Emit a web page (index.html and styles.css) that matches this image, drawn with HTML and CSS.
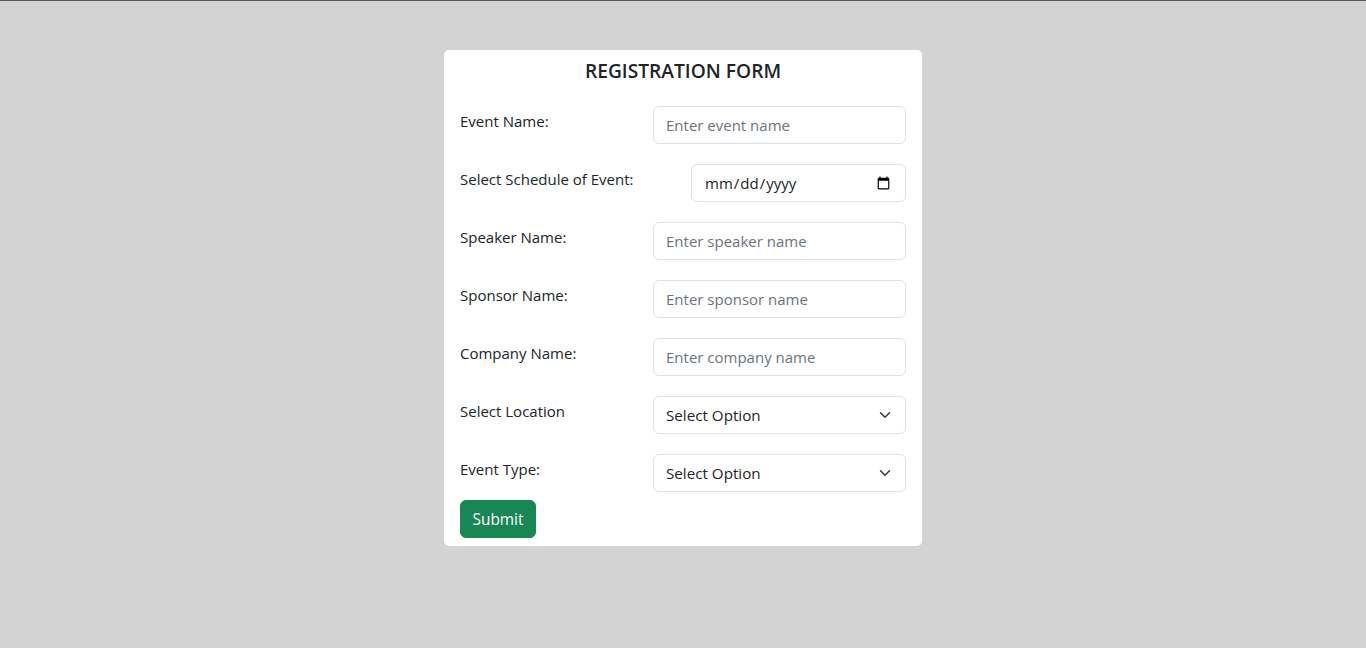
FILE: index.html
```html
<!DOCTYPE html>
<html lang="en">
<head>
<meta charset="utf-8">
<title>Registration Form</title>
<link rel="stylesheet" href="styles.css">
</head>
<body>
<main class="page">
  <form class="card">
    <h1 class="title">REGISTRATION FORM</h1>
    <div class="row">
      <label class="label" for="ev">Event Name:</label>
      <input class="control" id="ev" type="text" placeholder="Enter event name">
    </div>
    <div class="row">
      <label class="label" for="dt">Select Schedule of Event:</label>
      <input class="control date" id="dt" type="date">
    </div>
    <div class="row">
      <label class="label" for="sp">Speaker Name:</label>
      <input class="control" id="sp" type="text" placeholder="Enter speaker name">
    </div>
    <div class="row">
      <label class="label" for="so">Sponsor Name:</label>
      <input class="control" id="so" type="text" placeholder="Enter sponsor name">
    </div>
    <div class="row">
      <label class="label" for="co">Company Name:</label>
      <input class="control" id="co" type="text" placeholder="Enter company name">
    </div>
    <div class="row">
      <label class="label" for="lo">Select Location</label>
      <select class="control select" id="lo"><option>Select Option</option></select>
    </div>
    <div class="row last">
      <label class="label" for="ty">Event Type:</label>
      <select class="control select" id="ty"><option>Select Option</option></select>
    </div>
    <button class="submit" type="button">Submit</button>
  </form>
</main>
</body>
</html>
```
FILE: styles.css
```css
* { box-sizing: border-box; }
html, body { margin: 0; padding: 0; }
body {
  background: #d3d3d3;
  border-top: 1px solid #555;
  font-family: "Open Sans", "Noto Sans", sans-serif;
  color: #212529;
  min-height: 648px;
}
.page {
  display: flex;
  justify-content: center;
  padding-top: 49px;
}
.card {
  width: 478px;
  background: #fff;
  border-radius: 5px;
  padding: 8px 16px 8px 16px;
  display: flex;
  flex-direction: column;
}
.title {
  margin: 0 0 22px 0;
  font-size: 19.2px;
  font-weight: 600;
  text-align: center;
  line-height: 26px;
  color: #212529;
}
.row {
  display: flex;
  justify-content: space-between;
  align-items: flex-start;
  margin-bottom: 20px;
}
.row.last { margin-bottom: 8px; }
.label {
  font-size: 15px;
  line-height: 20px;
  padding-top: 5px;
}
.control {
  width: 253px;
  height: 38px;
  border: 1px solid #dee2e6;
  border-radius: 6px;
  padding: 6px 12px;
  font-family: inherit;
  font-size: 15px;
  color: #212529;
  background: #fff;
  outline: none;
}
.control::placeholder { color: #6c757d; opacity: 1; }
.date {
  width: 215px;
  font-size: 15px;
}
.select {
  font-size: 15.2px;
  appearance: none;
  -webkit-appearance: none;
  background-image: url("data:image/svg+xml,%3csvg xmlns='http://www.w3.org/2000/svg' viewBox='0 0 16 16'%3e%3cpath fill='none' stroke='%23343a40' stroke-linecap='round' stroke-linejoin='round' stroke-width='2' d='m2 5 6 6 6-6'/%3e%3c/svg%3e");
  background-repeat: no-repeat;
  background-position: right 12px center;
  background-size: 16px 12px;
  padding-right: 36px;
}
.submit {
  align-self: flex-start;
  width: 76px;
  height: 38px;
  background: #198754;
  color: #fff;
  border: 1px solid #198754;
  border-radius: 6px;
  font-family: inherit;
  font-size: 15.4px;
  padding: 0;
}
```
